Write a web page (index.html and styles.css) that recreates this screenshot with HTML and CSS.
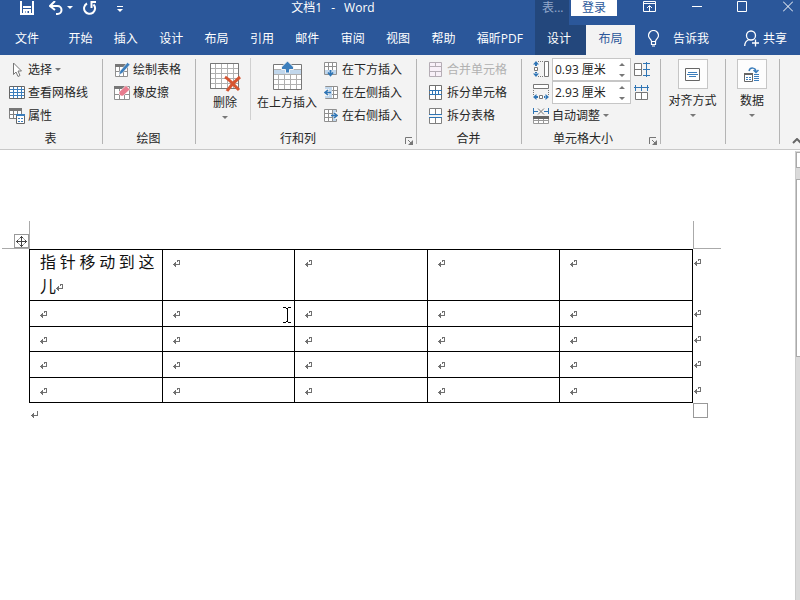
FILE: index.html
```html
<!DOCTYPE html>
<html lang="zh-CN">
<head>
<meta charset="utf-8">
<title>文档1 - Word</title>
<link rel="stylesheet" href="styles.css">
</head>
<body>
<svg class="defs" aria-hidden="true">
  <symbol id="mark" viewBox="0 0 8 9"><path d="M4 1h3v1H4zM4 1h1v2H4zM6 1h1v5H6zM1 5h6v1H1zM0 5h1v1H0zM1 4h1v3H1zM2 3h1v5H2z" fill="#707070"/></symbol>
  <symbol id="caret" viewBox="0 0 6 3"><path d="M0 0h6L3 3z" fill="currentColor"/></symbol>
  <symbol id="launcher" viewBox="0 0 8 8"><path d="M.5 7V.5H7M3 3l3 3" fill="none" stroke="#777"/><path d="M8 3v5H3z" fill="#777"/></symbol>
  <symbol id="minigrid" viewBox="0 0 13 13"><path d="M.5.5h12v12H.5zM.5 4.500h12M.5 8.500h12M4.500.5v12M8.500.5v12" fill="#fff" stroke="#909090"/></symbol>
</svg>

<header class="top">
  <div class="titlebar">
    <div class="quick">
      <button aria-label="保存"><svg width="14" height="15" viewBox="0 0 14 15"><path d="M1 1v13h12V1M3 7h8M4 14v-4h6v4M6.500 11v3" fill="none" stroke="#fff" stroke-width="2"/></svg></button>
      <button aria-label="撤消"><svg width="14" height="14" viewBox="0 0 14 14"><path d="M1 5h7.500a4 4 0 0 1 0 8H7M6 0L1 5l5 4" fill="none" stroke="#fff" stroke-width="2"/></svg></button>
      <button class="undo-more" aria-label="撤消选项"><svg width="6" height="3"><use href="#caret"/></svg></button>
      <button class="redo" aria-label="重复"><svg width="14" height="14" viewBox="0 0 14 14"><path d="M4 2.500A5.500 5.500 0 1 0 10.500 3.500M13 1H8.500v6" fill="none" stroke="#fff" stroke-width="2"/></svg></button>
      <button class="customize" aria-label="自定义快速访问工具栏"><svg width="6" height="7" viewBox="0 0 6 7"><path d="M0 .5h6" stroke="#fff"/><path d="M0 3h6L3 6z" fill="#fff"/></svg></button>
    </div>
    <div class="doc-title"><span>文档1</span><span>-</span><span>Word</span></div>
    <div class="window-area">
      <div class="context-title">表...</div>
      <button class="login">登录</button>
      <div class="window-buttons">
        <button aria-label="功能区显示选项"><svg width="13" height="11" viewBox="0 0 13 11"><path d="M.5.5h12v10H.5zM0 2.500h13M6.500 10V5M4 7l2.500-2.500L9 7" fill="none" stroke="#fff"/></svg></button>
        <button aria-label="最小化"><svg width="10" height="11" viewBox="0 0 10 11"><path d="M0 5.500h10" stroke="#fff"/></svg></button>
        <button aria-label="最大化"><svg width="10" height="11" viewBox="0 0 10 11"><path d="M.5.5h9v10h-9z" fill="none" stroke="#fff"/></svg></button>
        <button aria-label="关闭"><svg width="10" height="11" viewBox="0 0 10 11"><path d="M0 .5l10 10M10 .5l-10 10" stroke="#fff"/></svg></button>
      </div>
    </div>
  </div>
  <div class="tabbar">
    <nav class="tabs">
      <button class="file">文件</button>
      <button>开始</button><button>插入</button><button>设计</button><button>布局</button><button>引用</button><button>邮件</button><button>审阅</button><button>视图</button><button>帮助</button><button>福昕PDF</button>
    </nav>
    <div class="side-tabs">
      <button class="context-tab">设计</button>
      <button class="active-tab">布局</button>
      <button class="tell"><svg width="11" height="17" viewBox="0 0 11 17"><path d="M3.500 11.500C3.500 9 .5 8.500.5 5.500a5 5 0 0 1 10 0c0 3-3 3.500-3 6zM3.500 11.500v3h4v-3M4 16h3" fill="none" stroke="#fff" stroke-width="1.200"/></svg>告诉我</button>
      <button class="share"><svg width="15" height="17" viewBox="0 0 15 17"><circle cx="7" cy="5.500" r="4.500" fill="none" stroke="#fff" stroke-width="1.300"/><path d="M.7 16c0-4 2-5.500 4.300-6.500M8 13h7M11.500 9.500v7" fill="none" stroke="#fff" stroke-width="1.300"/></svg>共享</button>
    </div>
  </div>
</header>

<section class="ribbon">
  <div class="group g-table">
    <div class="body column">
      <button><svg width="16" height="16" viewBox="0 0 16 16"><path d="M4.500 1v11.500l2.500-2.500 2 4.500 2-1-2-4.500h3.500z" fill="#fff" stroke="#777"/></svg>选择<svg class="c" width="6" height="3"><use href="#caret"/></svg></button>
      <button><svg width="16" height="13" viewBox="0 0 16 13"><path d="M.5.500h15v12H.5z" fill="#fff" stroke="#666"/><path d="M1 3.500h14M1 6.500h14M1 9.500h14M4.500 1v11M8.500 1v11M12.500 1v11" stroke="#3c7ebc"/></svg>查看网格线</button>
      <button><svg width="16" height="16" viewBox="0 0 16 16"><path d="M.5.500h12v10H.5zM.5 6.500h12M4.500 2v9M8.500 2v9" fill="#fff" stroke="#808080"/><path d="M0 0h13v3H0z" fill="#777"/><path d="M7.500 6.500h8v9h-8z" fill="#fff" stroke="#666"/><path d="M7 6h9v2H7z" fill="#3c7ebc"/><path d="M9 10h2v1H9zM12 10h2v1h-2zM9 13h2v1H9zM12 13h2v1h-2z" fill="#3c7ebc"/></svg>属性</button>
    </div>
    <h2>表</h2>
  </div>
  <div class="group g-draw">
    <div class="body column">
      <button><svg width="16" height="16" viewBox="0 0 16 16"><path d="M1.500 2.500h12v12h-12zM1.500 9.500h12M5.500 4v10M9.500 4v10" fill="#fff" stroke="#909090"/><path d="M1 2h10v3H1z" fill="#777"/><path d="M5 13l1-4 7.500-8.500 2.500 2L8.500 11z" fill="#3c7ebc" stroke="#f3f3f3" stroke-width=".6"/></svg>绘制表格</button>
      <button><svg width="16" height="16" viewBox="0 0 16 16"><path d="M.5 1.500h15v13H.5zM.5 9.500h15M5.500 3v11M10.500 3v11" fill="#fff" stroke="#909090"/><path d="M0 1h10v3H0z" fill="#777"/><path d="M5 7l7-6.500 4 4L9 11H7L5 9z" fill="#e77c8e" stroke="#fff" stroke-width=".6"/></svg>橡皮擦</button>
    </div>
    <h2>绘图</h2>
  </div>
  <div class="group g-rows">
    <div class="body">
      <button class="big delete"><svg width="31" height="32" viewBox="0 0 31 32"><path d="M.5 2.500h28v25H.5zM.5 7.500h28M.5 12.500h28M.5 17.500h28M.5 22.500h28M5.500 2v25M11.500 2v25M17.500 2v25M23.500 2v25" fill="#fff" stroke="#b0b0b0"/><path d="M.5 2.500h28v25H.5z" fill="none" stroke="#777"/><path d="M15 16c5 3 9 8 14 13M30 16c-5 4-9 8-13 14" fill="none" stroke="#d65532" stroke-width="3"/></svg>删除<svg class="c" width="6" height="3"><use href="#caret"/></svg></button>
      <button class="big above"><svg width="29" height="32" viewBox="0 0 29 32"><path d="M.5 3.500h28v25H.5z" fill="#fff"/><path d="M1 9h27v4H1z" fill="#c1d7ec"/><path d="M.5 8.500h28M.5 13.500h28M.5 18.500h28M.5 23.500h28M5.500 13v15M11.500 13v15M17.500 13v15M23.500 13v15" stroke="#b0b0b0"/><path d="M.5 3.500h28v25H.5z" fill="none" stroke="#777"/><path d="M14.500 0l6 6v2.500h-4V12h-4V8.500h-4V6z" fill="#3c7ebc" stroke="#f3f3f3"/></svg>在上方插入</button>
      <div class="column">
        <button><svg width="14" height="15" viewBox="0 0 14 15"><path d="M.5.500h12v12H.5zM.5 4.500h12M4.500.500v8M8.500.500v8" fill="#fff" stroke="#909090"/><path d="M1 8h11v4H1z" fill="#c1d7ec"/><path d="M6.500 8v6M4 10.500l2.500 3 2.500-3" fill="none" stroke="#2f75b5" stroke-width="1.600"/></svg>在下方插入</button>
        <button><svg width="14" height="13" viewBox="0 0 14 13"><use href="#minigrid" x="1" width="13" height="13"/><path d="M1 1h7v11H1z" fill="#c1d7ec"/><path d="M1 3h4v7H1z" fill="#f3f3f3"/><path d="M7 6.500H1M4 4L1 6.500 4 9" fill="none" stroke="#2f75b5" stroke-width="1.600"/></svg>在左侧插入</button>
        <button><svg width="14" height="13" viewBox="0 0 14 13"><use href="#minigrid" width="13" height="13"/><path d="M9 1h3v11H9z" fill="#c1d7ec"/><path d="M10 3h4v7h-4z" fill="#f3f3f3"/><path d="M7 6.500h6M10 4l3 2.500L10 9" fill="none" stroke="#2f75b5" stroke-width="1.600"/></svg>在右侧插入</button>
      </div>
    </div>
    <h2>行和列</h2>
    <button class="launcher" aria-label="表格属性"><svg width="8" height="8"><use href="#launcher"/></svg></button>
  </div>
  <div class="group g-merge">
    <div class="body column">
      <button disabled><svg width="13" height="15" viewBox="0 0 13 15"><path d="M.5.500h12v14H.5zM.5 4.500h12M.5 9.500h12M6.500.500v4M6.500 9.500v5" fill="#f8f0f8" stroke="#b5adb5"/></svg>合并单元格</button>
      <button><svg width="13" height="15" viewBox="0 0 13 15"><path d="M.5.500h12v14H.5zM6.500.500v14" fill="#fff" stroke="#707070"/><path d="M0 5.500h13M0 9.500h13M3.500 5v5M6.500 5v5M9.500 5v5" stroke="#2f75b5"/></svg>拆分单元格</button>
      <button><svg width="13" height="16" viewBox="0 0 13 16"><path d="M.5 6V.500h12V6M6.500.500V6M.5 10v5.500h12V10M6.500 10v5.500" fill="#fff" stroke="#808080"/><path d="M0 6.500h13M0 9.500h13" stroke="#2f75b5"/></svg>拆分表格</button>
    </div>
    <h2>合并</h2>
  </div>
  <div class="group g-size">
    <div class="body column">
      <div class="field">
        <label for="row-height" aria-label="高度"><svg width="16" height="17" viewBox="0 0 16 17"><path d="M11.500.500h4v15h-4z" fill="#fff" stroke="#777"/><path d="M5 .500h6M5 15.500h6" stroke="#777" stroke-dasharray="1 1"/><path d="M1.500 6.500h3v3h-3z" fill="#fff" stroke="#777"/><path d="M3 0l3 3.500H0zM2 3h2v2H2zM3 16l3-3.500H0zM2 11h2v2H2z" fill="#2f75b5"/></svg></label>
        <span class="spin"><input id="row-height" value="0.93 厘米"><svg width="6" height="14" viewBox="0 0 6 14"><path d="M0 3h6L3 0zM0 11h6l-3 3z" fill="#777"/></svg></span>
        <button aria-label="分布行"><svg width="16" height="15" viewBox="0 0 16 15"><path d="M.5 1.500h7v12h-7zM.5 7.500h7" fill="#fff" stroke="#777"/><path d="M9 1.500h7M9 7.500h7M9 13.500h7M12.500 0v15" stroke="#2f75b5"/></svg></button>
      </div>
      <div class="field">
        <label for="column-width" aria-label="宽度"><svg width="16" height="17" viewBox="0 0 16 17"><path d="M.5.500h15v4H.5z" fill="#fff" stroke="#777"/><path d="M.5 6v5M15.500 6v5" stroke="#777" stroke-dasharray="1 1"/><path d="M6.500 11.500h3v3h-3z" fill="#fff" stroke="#777"/><path d="M0 13l3.500-3v6zM3 12h2v2H3zM16 13l-3.500-3v6zM11 12h2v2h-2z" fill="#2f75b5"/></svg></label>
        <span class="spin"><input id="column-width" value="2.93 厘米"><svg width="6" height="14" viewBox="0 0 6 14"><path d="M0 3h6L3 0zM0 11h6l-3 3z" fill="#777"/></svg></span>
        <button aria-label="分布列"><svg width="15" height="16" viewBox="0 0 15 16"><path d="M1.500 7.500h12v7h-12zM7.500 7.500v7" fill="#fff" stroke="#777"/><path d="M1.500 0v6M7.500 0v6M13.500 0v6M0 2.500h15" stroke="#2f75b5"/></svg></button>
      </div>
      <button><svg width="16" height="16" viewBox="0 0 16 16"><path d="M.5 0v6M15.500 0v6M0 3.500h5M11 3.500h5" stroke="#2f75b5"/><path d="M5 .500l6 6M11 .500l-6 6" stroke="#777"/><path d="M.5 9.500h15v6H.5zM5.500 9v7M10.500 9v7M0 12.500h16" fill="#fff" stroke="#999"/><path d="M0 8h16v3H0z" fill="#666"/></svg>自动调整<svg class="c" width="6" height="3"><use href="#caret"/></svg></button>
    </div>
    <h2>单元格大小</h2>
    <button class="launcher" aria-label="表格属性"><svg width="8" height="8"><use href="#launcher"/></svg></button>
  </div>
  <div class="group g-menu">
    <button class="menu"><span class="tile"><svg width="15" height="13" viewBox="0 0 15 13"><path d="M.5.500h14v12H.5z" fill="#fff" stroke="#666"/><path d="M3 4.500h9M2 6.500h11M4 8.500h7" stroke="#3c7ebc"/></svg></span>对齐方式<svg class="c" width="6" height="3"><use href="#caret"/></svg></button>
  </div>
  <div class="group g-menu">
    <button class="menu"><span class="tile"><svg width="16" height="15" viewBox="0 0 16 15"><path d="M.5 6.500h8v8h-8z" fill="#fff" stroke="#666"/><path d="M0 6h9v2H0z" fill="#666"/><path d="M2 10.500h2M5 10.500h2M2 12.500h2M5 12.500h2M10 7.500h5M10 9.500h5M10 11.500h5M10 13.500h5" stroke="#3c7ebc"/><path d="M5 4C6 0 12 0 12 5M9.500 3l2.500 2.500L14.500 3" fill="none" stroke="#3c7ebc" stroke-width="1.500"/></svg></span>数据<svg class="c" width="6" height="3"><use href="#caret"/></svg></button>
  </div>
  <button class="collapse" aria-label="折叠功能区"><svg width="10" height="6" viewBox="0 0 10 6"><path d="M1 5l4-4 4 4" fill="none" stroke="#666" stroke-width="2"/></svg></button>
</section>

<div class="workspace">
  <main class="page">
    <div class="sheet">
      <span class="corner left"></span><span class="corner right"></span>
      <button class="move" aria-label="移动表格"><svg width="11" height="11" viewBox="0 0 11 11"><path d="M5.500 0v11M0 5.500h11M3.500 2.500l2-2 2 2M3.500 8.500l2 2 2-2M2.500 3.500l-2 2 2 2M8.500 3.500l2 2-2 2" fill="none" stroke="#444"/></svg></button>
      <table>
        <tr class="first"><td><span class="spread">指针移动到这</span>儿<svg><use href="#mark"/></svg></td><td><svg><use href="#mark"/></svg></td><td><svg><use href="#mark"/></svg></td><td><svg><use href="#mark"/></svg></td><td><svg><use href="#mark"/></svg><svg class="row-end"><use href="#mark"/></svg></td></tr>
        <tr><td><svg><use href="#mark"/></svg></td><td><svg><use href="#mark"/></svg><svg class="ibeam" viewBox="0 0 8 16"><path d="M0 .500h3M5 .500h3M3 1.500h2M4.500 1v14M0 15.500h3M5 15.500h3M3 14.500h2" fill="none" stroke="#000"/></svg></td><td><svg><use href="#mark"/></svg></td><td><svg><use href="#mark"/></svg></td><td><svg><use href="#mark"/></svg><svg class="row-end"><use href="#mark"/></svg></td></tr>
        <tr><td><svg><use href="#mark"/></svg></td><td><svg><use href="#mark"/></svg></td><td><svg><use href="#mark"/></svg></td><td><svg><use href="#mark"/></svg></td><td><svg><use href="#mark"/></svg><svg class="row-end"><use href="#mark"/></svg></td></tr>
        <tr><td><svg><use href="#mark"/></svg></td><td><svg><use href="#mark"/></svg></td><td><svg><use href="#mark"/></svg></td><td><svg><use href="#mark"/></svg></td><td><svg><use href="#mark"/></svg><svg class="row-end"><use href="#mark"/></svg></td></tr>
        <tr><td><svg><use href="#mark"/></svg></td><td><svg><use href="#mark"/></svg></td><td><svg><use href="#mark"/></svg></td><td><svg><use href="#mark"/></svg></td><td><svg><use href="#mark"/></svg><svg class="row-end"><use href="#mark"/></svg></td></tr>
      </table>
      <span class="resize"></span>
      <p><svg viewBox="0 0 8 9"><path d="M6 1h1v5H6zM1 5h6v1H1zM0 5h1v1H0zM1 4h1v3H1zM2 3h1v5H2z" fill="#707070"/></svg></p>
    </div>
  </main>
  <div class="scrollbar"><button class="up" aria-label="向上滚动"></button><div class="thumb"></div></div>
</div>
</body>
</html>
```
FILE: styles.css
```css
* { box-sizing: border-box; }
body {
  margin: 0;
  min-height: 100vh;
  display: flex;
  flex-direction: column;
  overflow: hidden;
  background: #fff;
  color: #262626;
  font: 12px/16px "Open Sans", "Noto Sans CJK SC", sans-serif;
}
svg { flex: none; }
.defs { position: absolute; width: 0; height: 0; }
button {
  display: flex;
  align-items: center;
  padding: 0;
  border: 0;
  background: none;
  color: inherit;
  font: inherit;
  white-space: nowrap;
}

/* title bar and tabs */
.top { background: #2b579a; color: #fff; }
.titlebar { display: flex; height: 25px; }
.quick { display: flex; align-items: center; height: 15px; padding-left: 20px; }
.undo-more { margin-left: 4px; }
.quick button:nth-child(2) { margin-left: 15px; }
.redo { margin-left: 10px; }
.customize { margin-left: 20px; }
.quick .customize { padding-top: 3px; }
.doc-title { display: flex; flex: 1; justify-content: center; gap: 9px; padding-left: 8px; line-height: 16px; }
.window-area { display: flex; width: 265px; align-items: flex-start; }
.context-title { width: 34px; height: 25px; padding-left: 7px; background: #23477c; color: #92a7cb; line-height: 16px; }
.login { width: 46px; height: 16px; margin-left: 2px; justify-content: center; background: #fff; color: #2b579a; line-height: 14px; }
.window-buttons { display: flex; flex: 1; justify-content: space-between; padding: 1px 7px 0 26px; }
.tabbar { display: flex; height: 30px; }
.tabs { display: flex; flex: 1; justify-content: space-between; padding: 0 12px 0 15px; }
.tabs button, .side-tabs button { padding-bottom: 3px; }
.file { margin-right: 8px; }
.side-tabs { display: flex; width: 265px; }
.side-tabs .context-tab { width: 51px; justify-content: center; background: #23477c; padding-right: 3px; }
.side-tabs .active-tab { width: 49px; justify-content: center; background: #f3f3f3; color: #2b579a; }
.tell { gap: 14px; margin-left: 13px; }
.share { gap: 4px; margin-left: auto; margin-right: 13px; }

/* ribbon */
.ribbon {
  display: grid;
  grid-template-columns: 103px 93px 221px 105px 139px 65px 54px 1fr;
  padding-top: 3px;
  background: #f3f3f3;
  border-bottom: 1px solid #c8c8c8;
}
.group { position: relative; display: flex; flex-direction: column; }
.group::after { content: ""; position: absolute; right: 0; top: 1px; bottom: 5px; width: 1px; background: #b4b4b4; }
.group h2 { margin: 0; padding: 4px 2px 2px 0; font: inherit; text-align: center; }
.body { display: flex; height: 69px; }
.column { display: flex; flex-direction: column; }
.column button { height: 23px; gap: 4px; }
.c { color: #777; }
.g-table .column button, .g-draw .column button, .g-size .column button { gap: 3px; }
.g-table .body { padding-left: 9px; }
.g-draw .body { padding-left: 11px; }
.g-rows .body { padding-left: 14px; }
.group.g-rows h2, .group.g-size h2 { padding-right: 17px; }
.big { flex-direction: column; padding-top: 3px; }
.big .c { margin-top: 5px; }
.big svg:first-child { margin-bottom: 2px; }
.delete { width: 41px; height: 62px; border-right: 1px solid #d0d0d0; padding-right: 10px; }
.above { width: 60px; margin: 0 7px 0 6px; }
.launcher { position: absolute; right: 4px; bottom: 4px; }
.g-merge .body { padding-left: 12px; }
.g-merge .column button { gap: 5px; }
button:disabled { color: #b1b1b1; }
.g-size .body { padding-left: 11px; }
.field { display: flex; align-items: center; height: 23px; gap: 3px; }
.field label { display: flex; }
.spin { display: flex; align-items: center; width: 79px; height: 23px; padding-right: 5px; border: 1px solid #c6c6c6; background: #fff; }
.spin input { flex: 1; min-width: 0; padding: 0 0 0 2px; border: 0; outline: 0; background: none; color: inherit; font: inherit; }
.menu { flex-direction: column; padding-top: 1px; padding-right: 2px; }
.tile { display: flex; align-items: center; justify-content: center; width: 30px; height: 30px; margin-bottom: 4px; border: 1px solid #c6c6c6; background: #fdfdfd; }
.menu .c { margin-top: 5px; }
.collapse { align-self: end; justify-self: end; margin-bottom: 5px; margin-right: -2px; }

/* document */
.workspace { display: flex; flex: 1; }
.page { flex: 1; padding: 99px 102px 0 29px; }
.sheet { position: relative; }
table { width: 100%; height: 154px; border-collapse: collapse; table-layout: fixed; }
td {
  position: relative;
  padding: 0 7px 0 10px;
  border: 1px solid #000;
  font-size: 16px;
  line-height: 24px;
  vertical-align: top;
  color: #111;
}
.first { height: 51px; }
.spread { display: block; text-align: justify; text-align-last: justify; }
td svg, p svg { width: 8px; height: 9px; }
td .row-end { position: absolute; right: -10px; top: 8px; }
td .ibeam { position: absolute; right: 3px; top: 6px; width: 8px; height: 16px; }
.corner { position: absolute; top: -28px; width: 28px; height: 28px; border-bottom: 1px solid #aaa; }
.corner.left { left: -27px; border-right: 1px solid #aaa; }
.corner.right { right: -28px; border-left: 1px solid #aaa; }
.move { position: absolute; left: -15px; top: -15px; width: 15px; height: 14px; justify-content: center; border: 1px solid #999; background: #fff; }
.resize { position: absolute; right: -15px; top: 154px; width: 15px; height: 15px; border: 1px solid #999; }
p { margin: 0; padding-left: 2px; line-height: 24px; }
.scrollbar { width: 5px; margin-top: 1px; border-left: 1px solid #ccc; background: #dadada; }
.up { width: 100%; height: 16px; margin-top: 1px; border: 1px solid #aaa; border-right: 0; background: #fff; }
.thumb { height: 178px; margin-top: 11px; border: 1px solid #aaa; border-right: 0; background: #fff; }
```
